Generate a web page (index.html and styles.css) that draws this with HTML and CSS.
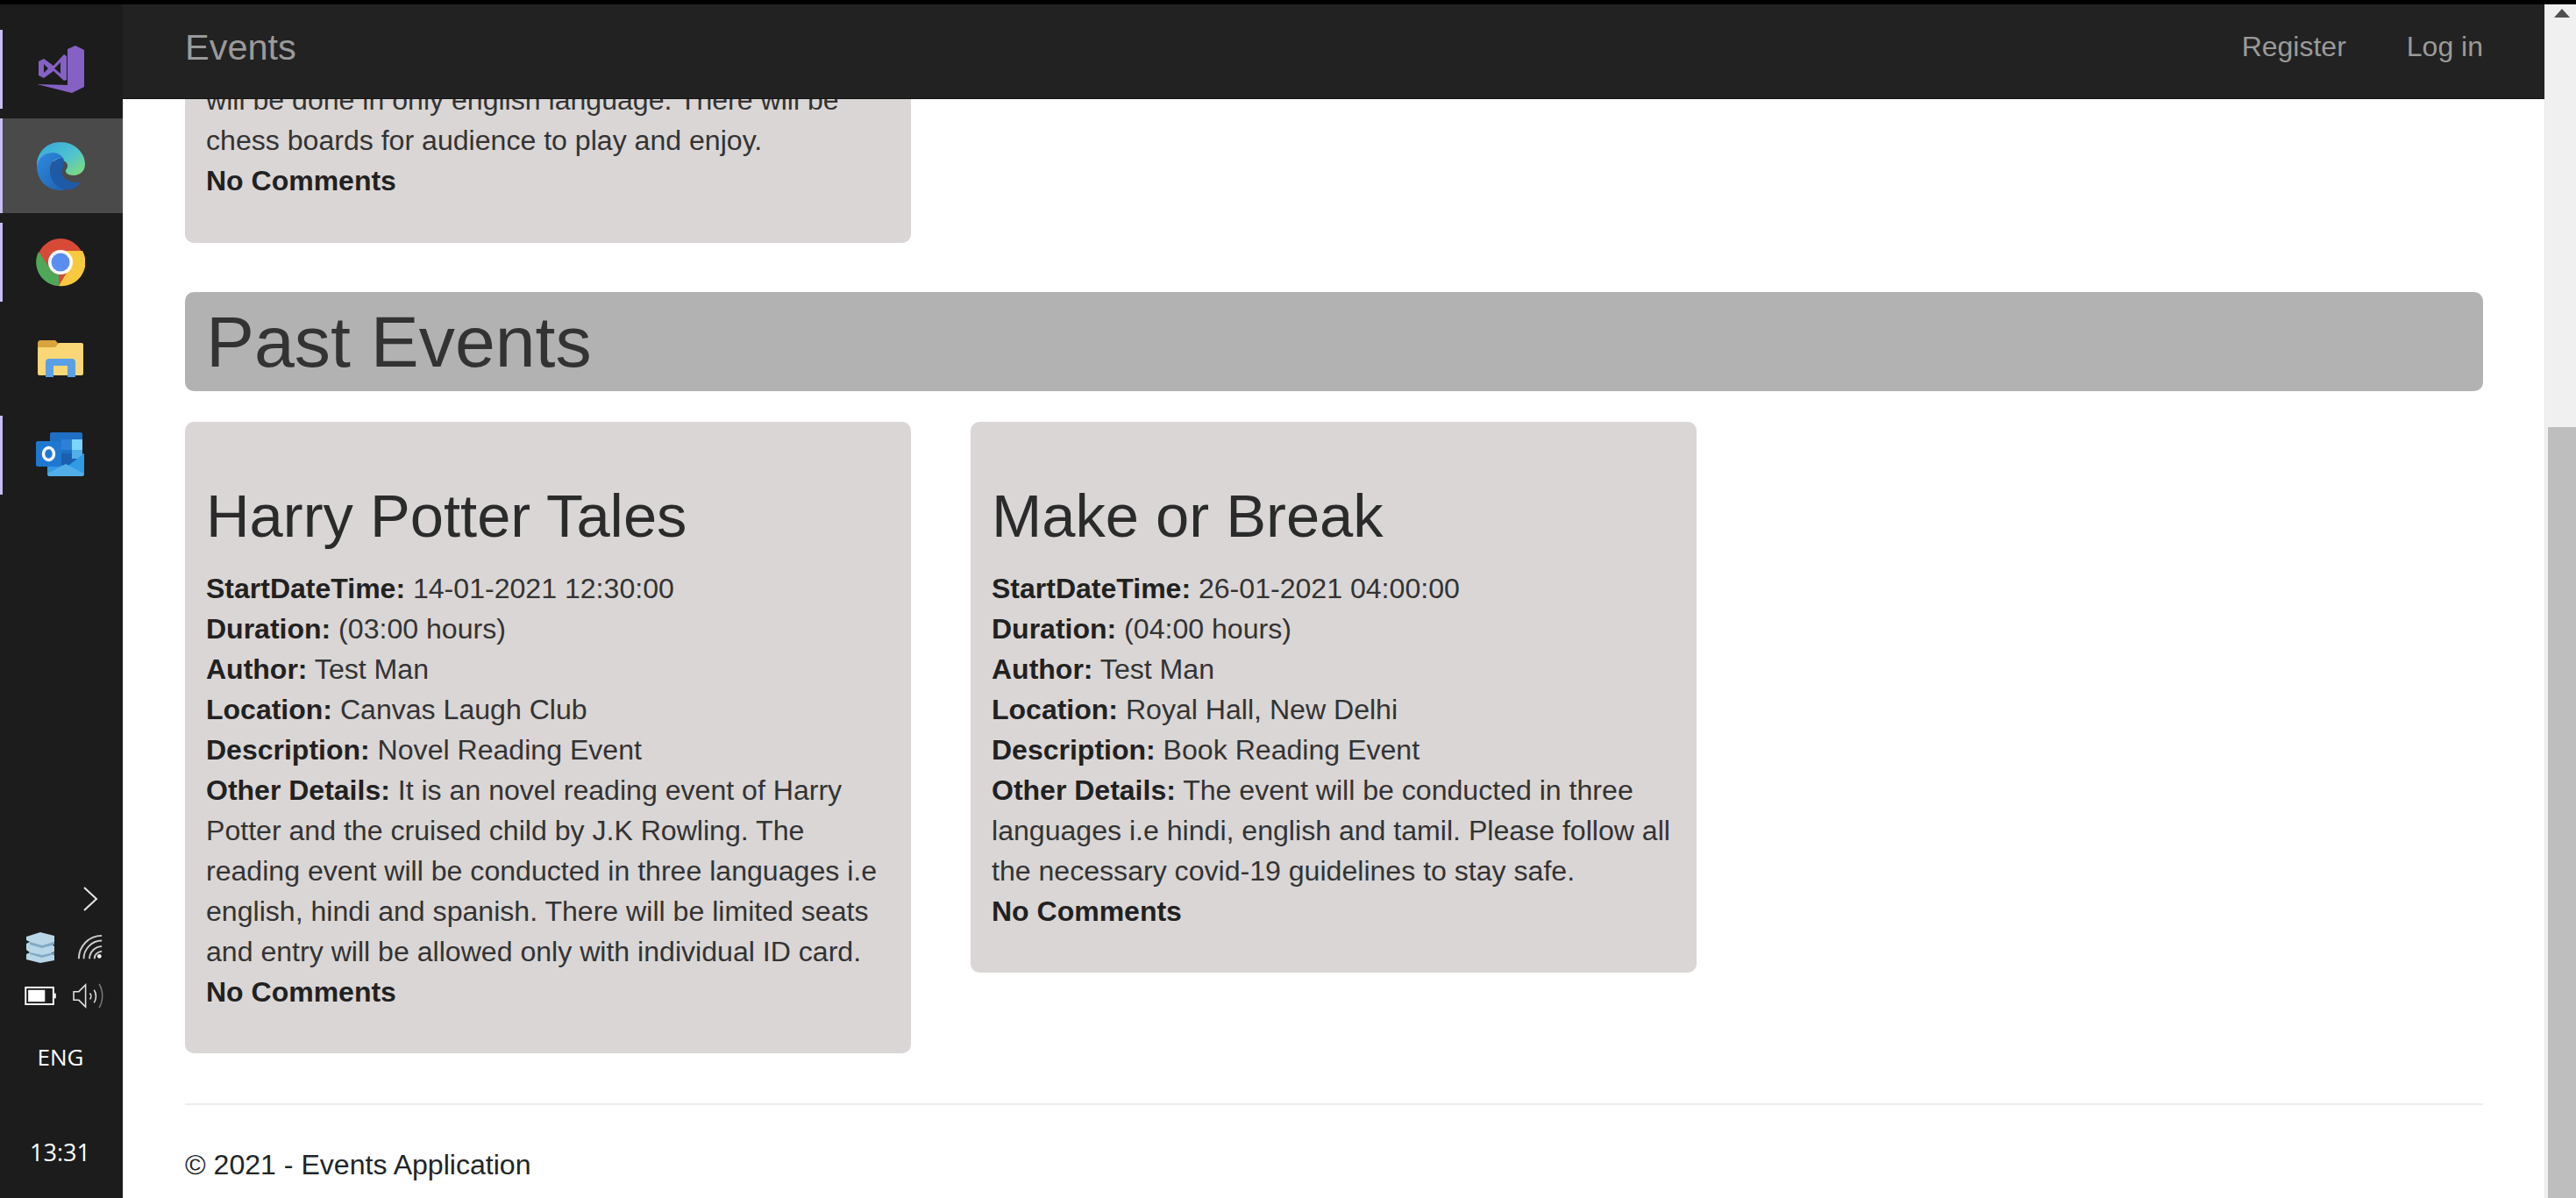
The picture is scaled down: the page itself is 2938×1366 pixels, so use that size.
FILE: index.html
```html
<!DOCTYPE html>
<html lang="en">
<head>
<meta charset="utf-8">
<title>Events</title>
<link rel="stylesheet" href="styles.css">
</head>
<body>
<div class="screen">
  <aside class="taskbar">
    <div class="apps">
      <div class="app pinned">
        <svg class="icon" viewBox="0 0 56 56"><path fill="#8661c5" d="M45 1 55 6V48L41 55 1 45 36 46V5Z"/><path fill="#8661c5" fill-rule="evenodd" d="M3 19 9 16 20 24 32 11 35 13V40L32 41 20 30 9 38 3 35ZM9 22V32L14 27ZM21 27 28 33V20Z"/></svg>
      </div>
      <div class="app pinned active">
        <svg class="icon" viewBox="0 0 56 56">
          <defs>
            <linearGradient id="edgeTop" x1="0" y1="0" x2="1" y2="1"><stop offset="0" stop-color="#35a5dc"/><stop offset=".55" stop-color="#4fc3cf"/><stop offset="1" stop-color="#86e06f"/></linearGradient>
            <linearGradient id="edgeLow" x1="0" y1="0" x2="1" y2="1"><stop offset="0" stop-color="#2f8be0"/><stop offset="1" stop-color="#1e5fae"/></linearGradient>
          </defs>
          <path fill="url(#edgeTop)" d="M1 28C1 12 13 1 28 1 44 1 56 13 56 26 56 34 50 39 43 39 37 39 33 36 34 33 36 30 37 28 35 25 31 20 22 20 16 26 8 32 2 36 1 28Z"/>
          <path fill="url(#edgeLow)" d="M1 28C3 17 12 13 20 13 24 13 28 15 31 19 22 18 16 24 16 33 16 44 24 53 35 55 32 56 30 56 28 56 12 56 1 44 1 28Z"/>
          <path fill="#1f5aa6" d="M31 19C23 19 16 25 16 34 16 45 24 53 34 55 42 56 48 52 51 46 46 48 41 47 37 45 31 42 29 37 30 33 31 28 33 24 31 19Z"/>
        </svg>
      </div>
      <div class="app pinned">
        <svg class="icon" viewBox="0 0 56 56">
          <circle cx="28" cy="28" r="27" fill="#d84a38"/>
          <path fill="#f7c93e" d="M28 15H53A27 27 0 0 1 26 55L38 35A14 14 0 0 0 28 15Z"/>
          <path fill="#4fa758" d="M3 16 16 35A14 14 0 0 0 26 42L26 55A27 27 0 0 1 3 16Z"/>
          <circle cx="28" cy="28" r="14" fill="#fff"/>
          <circle cx="28" cy="28" r="10.5" fill="#5a8df0"/>
        </svg>
      </div>
      <div class="app">
        <svg class="icon folder" viewBox="0 0 52 42">
          <path fill="#d9a43c" d="M2 0H20L24 4 24 8H0V2Z"/>
          <path fill="#f9d776" d="M0 8H20L24 3H50A2 2 0 0 1 52 5V38A2 2 0 0 1 50 40H2A2 2 0 0 1 0 38Z"/>
          <path fill="#5aa0e6" d="M9 42V25A4 4 0 0 1 13 21H39A4 4 0 0 1 43 25V42H34V29H18V42Z"/>
          <path fill="#f9d776" d="M18 29H34V40H18Z"/>
        </svg>
      </div>
      <div class="app pinned">
        <svg class="icon" viewBox="0 0 56 52">
          <path fill="#1f6fc4" d="M16 2A2 2 0 0 1 18 0H51A2 2 0 0 1 53 2V28H16Z"/>
          <path fill="#2f7fd6" d="M29 8H41V20H29Z"/>
          <path fill="#7bd4fb" d="M41 8H53V20H41Z"/>
          <path fill="#1a5fb0" d="M16 24H55V40H16Z"/>
          <path fill="#52aee8" d="M41 20H53V30H41Z"/>
          <path fill="#2f9ae6" d="M13 28 34 40 55 24V47A3 3 0 0 1 52 50H16A3 3 0 0 1 13 47Z"/>
          <path fill="#52aee8" d="M13 47 34 36 55 47V47A3 3 0 0 1 52 50H16A3 3 0 0 1 13 47Z"/>
          <path fill="#1f78d0" d="M0 12A2 2 0 0 1 2 10H27A2 2 0 0 1 29 12V37A2 2 0 0 1 27 39H2A2 2 0 0 1 0 37Z"/>
          <ellipse cx="14.500" cy="24.500" rx="6" ry="7" fill="none" stroke="#fff" stroke-width="3.500"/>
        </svg>
      </div>
    </div>
    <div class="tray">
      <svg class="chevron" viewBox="0 0 18 30"><path d="M2 2 16 15 2 28" fill="none" stroke="#e8e8e8" stroke-width="2"/></svg>
      <div class="tray-row">
        <svg class="tray-icon" viewBox="0 0 36 36">
          <path fill="#b9d6e8" d="M2 6 18 1 34 5V12L30 14 34 17V23L30 25 34 27V33L18 36 2 32V26L6 24 2 21V14L6 12 2 10Z"/>
          <path fill="#7fa9c6" d="M6 12 20 16 34 12V15L20 19 6 15ZM6 24 20 27 34 24V26L20 30 6 26Z"/>
        </svg>
        <svg class="tray-icon wifi" viewBox="0 0 32 32" fill="none" stroke="#cfcfcf" stroke-width="2"><path d="M2 30C2 15 14 2 30 2"/><path d="M8 30C8 18 18 8 30 8"/><path d="M15 30C15 22 22 15 30 15"/><path d="M21 30C21 25 25 22 30 21"/><circle cx="27" cy="27" r="2.500" fill="#fff" stroke="none"/></svg>
      </div>
      <div class="tray-row">
        <svg class="tray-icon battery" viewBox="0 0 38 24"><rect x="1" y="2" width="33" height="20" fill="none" stroke="#fff" stroke-width="2"/><rect x="4" y="5" width="20" height="14" fill="#fff"/><rect x="35" y="9" width="2" height="6" fill="#fff"/></svg>
        <svg class="tray-icon speaker" viewBox="0 0 36 30" fill="none" stroke="#e2e2e2" stroke-width="1.600"><path d="M1 10H7L15 2V28L7 20H1Z"/><path d="M20 12C22 14 22 17 20 19"/><path d="M25 8C28 12 28 19 25 23"/><path d="M31 1C36 9 36 21 31 29" stroke="#777"/></svg>
      </div>
      <div class="lang">ENG</div>
      <div class="clock">13:31</div>
    </div>
  </aside>

  <div class="browser">
    <header class="navbar">
      <a class="brand">Events</a>
      <nav class="nav-links"><a>Register</a><a>Log in</a></nav>
    </header>
    <main class="page">
      <article class="card upcoming">
        <p>will be done in only english language. There will be chess boards for audience to play and enjoy.<br><b>No Comments</b></p>
      </article>
      <h1 class="section-title">Past Events</h1>
      <section class="cards">
        <article class="card">
          <h2>Harry Potter Tales</h2>
          <p><b>StartDateTime:</b> 14-01-2021 12:30:00<br>
          <b>Duration:</b> (03:00 hours)<br>
          <b>Author:</b> Test Man<br>
          <b>Location:</b> Canvas Laugh Club<br>
          <b>Description:</b> Novel Reading Event<br>
          <b>Other Details:</b> It is an novel reading event of Harry Potter and the cruised child by J.K Rowling. The reading event will be conducted in three languages i.e english, hindi and spanish. There will be limited seats and entry will be allowed only with individual ID card.<br>
          <b>No Comments</b></p>
        </article>
        <article class="card">
          <h2>Make or Break</h2>
          <p><b>StartDateTime:</b> 26-01-2021 04:00:00<br>
          <b>Duration:</b> (04:00 hours)<br>
          <b>Author:</b> Test Man<br>
          <b>Location:</b> Royal Hall, New Delhi<br>
          <b>Description:</b> Book Reading Event<br>
          <b>Other Details:</b> The event will be conducted in three languages i.e hindi, english and tamil. Please follow all the necessary covid-19 guidelines to stay safe.<br>
          <b>No Comments</b></p>
        </article>
      </section>
      <footer class="footer">© 2021 - Events Application</footer>
    </main>
  </div>

  <div class="scrollbar">
    <span class="arrow"></span>
    <div class="thumb"></div>
  </div>
</div>
</body>
</html>
```
FILE: styles.css
```css
* { box-sizing: border-box; }
html, body { margin: 0; height: 100%; overflow: hidden; }
body { background: #000; font-family: "Liberation Sans", Arial, sans-serif; color: #212529; }

.screen {
  display: flex;
  height: 1366px;
  width: 2938px;
  padding-top: 5px;
  background: #000;
}

/* Vertical Windows taskbar */
.taskbar {
  width: 140px;
  flex: none;
  display: flex;
  flex-direction: column;
  justify-content: space-between;
  background: #1c1c1c;
  color: #fff;
  font-family: "Open Sans", sans-serif;
}
.apps { display: flex; flex-direction: column; gap: 10px; padding-top: 24px; }
.app {
  height: 100px;
  display: flex;
  align-items: center;
  justify-content: center;
  padding-right: 3px;
  position: relative;
}
.app.pinned::before {
  content: "";
  position: absolute;
  left: 0;
  top: 5px;
  bottom: 5px;
  width: 3px;
  background: #c9bdf2;
}
.app.active { background: #4a4a4a; height: 108px; margin: -4px 0; }
.app.active::before { top: 0; bottom: 0; }
.icon { width: 56px; height: 56px; display: block; }
.icon.folder { width: 52px; height: 42px; }

.tray { display: flex; flex-direction: column; align-items: center; padding-bottom: 35px; }
.chevron { width: 18px; height: 30px; margin: 0 0 22px 66px; display: block; }
.tray-row { display: flex; align-items: center; justify-content: space-between; height: 36px; margin-bottom: 19px; width: 100%; padding: 0 22px 0 28px; }
.tray-icon { width: 36px; height: 36px; display: block; }
.wifi { width: 30px; height: 30px; }
.battery { width: 37px; height: 23px; }
.speaker { width: 35px; height: 29px; }
.lang { font-size: 26px; line-height: 34px; margin: 16px 2px 75px 0; font-weight: 500; }
.clock { font-size: 27px; line-height: 34px; margin-right: 3px; }

/* Browser viewport */
.browser {
  flex: 1;
  min-width: 0;
  display: flex;
  flex-direction: column;
  background: #fff;
  overflow: hidden;
}
.navbar {
  flex: none;
  height: 108px;
  display: flex;
  align-items: center;
  justify-content: space-between;
  padding: 0 70px 10px 71px;
  background: #222;
  border-bottom: 1px solid #111;
  color: #9a9a9a;
  position: relative;
  z-index: 1;
}
.brand { font-size: 41.500px; }
.nav-links { display: flex; gap: 69px; font-size: 32px; }

.page {
  flex: 1;
  min-height: 0;
  display: flex;
  flex-direction: column;
  justify-content: flex-end;
  padding: 0 70px 0 71px;
  overflow: hidden;
}
.card {
  width: 828px;
  flex: none;
  background: #dad6d6;
  border-radius: 10px;
  padding: 14px 24px 47px;
  font-size: 32.100px;
  line-height: 46px;
  color: #333;
}
.card p { margin: 0; }
.card b { color: #212121; font-size: 32px; }
.card h2 { margin: 53px 0 19px; font-size: 68.700px; line-height: 81px; font-weight: 400; color: #2b2b2b; }
.upcoming { padding-top: 0; padding-bottom: 48px; }
.section-title {
  flex: none;
  margin: 56px 0 35px;
  height: 113px;
  padding: 0 24px;
  background: #b2b2b2;
  border-radius: 10px;
  font-size: 82.400px;
  line-height: 113px;
  font-weight: 400;
  color: #333;
}
.cards { display: flex; align-items: flex-start; gap: 68px; flex: none; }
.footer {
  flex: none;
  margin-top: 57px;
  height: 108px;
  padding-top: 46px;
  border-top: 2px solid #eee;
  font-size: 32.100px;
  line-height: 44px;
}

/* Browser scrollbar */
.scrollbar { width: 36px; flex: none; background: #f0f0f0; display: flex; flex-direction: column; align-items: center; border-left: 1px solid #e8e8e8; padding-left: 3px; }
.arrow { width: 0; height: 0; margin-top: 5px; border: 9px solid transparent; border-top: 0; border-bottom: 10px solid #505050; }
.thumb { width: 100%; margin-top: 467px; flex: 1; background: #bebebe; }
```
